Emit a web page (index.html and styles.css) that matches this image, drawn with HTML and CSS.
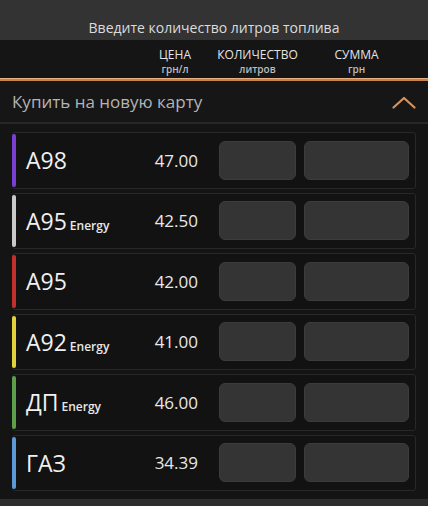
FILE: index.html
```html
<!DOCTYPE html>
<html lang="ru">
<head>
<meta charset="utf-8">
<title>Топливо</title>
<link rel="stylesheet" href="styles.css">
</head>
<body>
<div class="app">
  <div class="topbar">Введите количество литров топлива</div>
  <div class="colhead">
    <div class="col col-price"><span class="lbl">ЦЕНА</span><span class="sub">грн/л</span></div>
    <div class="col col-qty"><span class="lbl">КОЛИЧЕСТВО</span><span class="sub">литров</span></div>
    <div class="col col-sum"><span class="lbl">СУММА</span><span class="sub">грн</span></div>
  </div>
  <div class="accent"></div>
  <div class="section">
    <span class="section-title">Купить на новую карту</span>
    <svg class="chev" width="24" height="13" viewBox="0 0 24 13"><path d="M1.5 11.5 L12 2 L22.5 11.5" fill="none" stroke="#d9935a" stroke-width="2.2" stroke-linecap="round" stroke-linejoin="round"/></svg>
  </div>
  <div class="list">
    <div class="card"><span class="stripe s-purple"></span><span class="name">A98</span><span class="price">47.00</span><span class="inp inp-qty"></span><span class="inp inp-sum"></span></div>
    <div class="card"><span class="stripe s-gray"></span><span class="name">A95<small>Energy</small></span><span class="price">42.50</span><span class="inp inp-qty"></span><span class="inp inp-sum"></span></div>
    <div class="card"><span class="stripe s-red"></span><span class="name">A95</span><span class="price">42.00</span><span class="inp inp-qty"></span><span class="inp inp-sum"></span></div>
    <div class="card"><span class="stripe s-yellow"></span><span class="name">A92<small>Energy</small></span><span class="price">41.00</span><span class="inp inp-qty"></span><span class="inp inp-sum"></span></div>
    <div class="card"><span class="stripe s-green"></span><span class="name">ДП<small>Energy</small></span><span class="price">46.00</span><span class="inp inp-qty"></span><span class="inp inp-sum"></span></div>
    <div class="card"><span class="stripe s-blue"></span><span class="name">ГАЗ</span><span class="price">34.39</span><span class="inp inp-qty"></span><span class="inp inp-sum"></span></div>
  </div>
  <div class="bottombar"></div>
</div>
</body>
</html>
```
FILE: styles.css
```css
* { box-sizing: border-box; }
html, body { margin: 0; padding: 0; background: #141414; }
body { font-family: "Open Sans", "Noto Sans", sans-serif; color: #e6e6e6; }
.app { width: 428px; height: 506px; overflow: hidden; display: flex; flex-direction: column; background: #141414; }

.topbar {
  height: 40px; background: #333333; color: #dcdcdc;
  font-size: 14px; line-height: 19px; text-align: center; padding-top: 18px;
}

.colhead { height: 38px; background: #151515; display: flex; padding-top: 7px; }
.col { display: flex; flex-direction: column; align-items: center; min-width: 0; flex: none; }
.col-price { width: 50px; margin-left: 150px; }
.col-qty { width: 77px; margin-left: 19px; }
.col-sum { width: 105px; margin-left: 8px; }
.lbl { font-size: 12px; line-height: 16px; color: #e4e4e4; white-space: nowrap; }
.sub { font-size: 10px; line-height: 12px; font-weight: 600; color: #bdbdbd; white-space: nowrap; }

.accent { height: 3px; background: #c98548; border-top: 1px solid #e6b189; }

.section {
  height: 43px; background: #161616; display: flex; align-items: center; justify-content: space-between;
  padding: 0 12px; border-bottom: 2px solid #272727;
}
.section-title { font-size: 17px; color: #b4b4b4; }
.chev { margin-top: 1px; }

.list { display: flex; flex-direction: column; gap: 4px; padding: 8px 12px 0; flex: 1; }
.card {
  height: 56.5px; border: 1px solid #282828; border-radius: 3px; background: #121212;
  display: flex; align-items: center; padding-right: 6px;
}
.stripe { width: 4px; align-self: stretch; margin: 1px 0 1px -1px; border-radius: 2px; }
.s-purple { background: #7a3ed3; }
.s-gray { background: #c9c9c9; }
.s-red { background: #c1302d; }
.s-yellow { background: #e2d23a; }
.s-green { background: #5d9e4a; }
.s-blue { background: #5b98d6; }
.name { width: 124px; padding-left: 10px; font-size: 23px; color: #f0f0f0; display: flex; align-items: baseline; white-space: nowrap; }
.name small { font-size: 12px; font-weight: 600; margin-left: 3px; color: #e8e8e8; }
.price { width: 58px; text-align: right; font-size: 17px; color: #e8e8e8; margin-right: 21px; }
.inp { height: 39px; background: #343434; border: 1px solid #3c3c3c; border-radius: 6px; }
.inp-qty { width: 77px; margin-right: 8px; }
.inp-sum { width: 105px; }

.bottombar { height: 7px; background: #2d2d2d; }
```
